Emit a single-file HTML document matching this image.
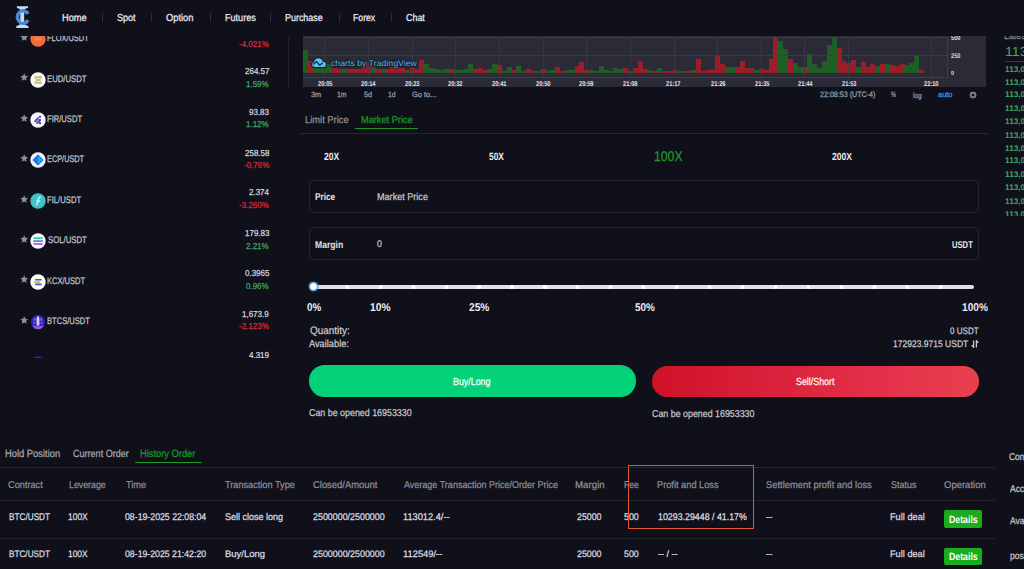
<!DOCTYPE html>
<html><head><meta charset="utf-8"><style>
html,body{margin:0;padding:0;}
body{width:1024px;height:569px;overflow:hidden;background:#0f101a;position:relative;font-family:"Liberation Sans", sans-serif;text-rendering:geometricPrecision;}
.t{position:absolute;white-space:nowrap;transform-origin:0 0;-webkit-text-stroke:0.25px currentColor;}
</style></head><body>
<svg style="position:absolute;left:0;top:0" width="40" height="34" viewBox="0 0 40 34">
<path d="M16.9 6.2 H28.1 V8.1 Q24.6 8.6 24.2 10.5 V23.6 Q24.6 25.5 28.5 26 V28 H16.3 V26 Q20.0 25.5 20.4 23.6 V10.5 Q20.0 8.6 16.9 8.1 Z" fill="#c6daf4"/>
<path d="M28.1 13.9 A5.75 6.15 0 1 0 28.1 20.2" fill="none" stroke="#4a86d6" stroke-width="3.6"/>
<rect x="20.6" y="12.6" width="3.4" height="9" fill="#c6daf4"/>
</svg>
<div style="position:absolute;left:101.70px;top:13.30px;width:1.00px;height:8.30px;background:#2e2f3a;"></div>
<div style="position:absolute;left:151.20px;top:13.30px;width:1.00px;height:8.30px;background:#2e2f3a;"></div>
<div style="position:absolute;left:209.50px;top:13.30px;width:1.00px;height:8.30px;background:#2e2f3a;"></div>
<div style="position:absolute;left:270.00px;top:13.30px;width:1.00px;height:8.30px;background:#2e2f3a;"></div>
<div style="position:absolute;left:338.50px;top:13.30px;width:1.00px;height:8.30px;background:#2e2f3a;"></div>
<div style="position:absolute;left:390.50px;top:13.30px;width:1.00px;height:8.30px;background:#2e2f3a;"></div>
<svg style="position:absolute;left:30.05px;top:31.10px" width="16" height="16" viewBox="0 0 16 16"><circle cx="8" cy="8" r="7.7" fill="#f26a38"/><rect x="4.5" y="6.5" width="7" height="3" fill="#f79a70" opacity=".6"/></svg>
<svg style="position:absolute;left:20.4px;top:33.00px" width="8.4" height="8.4" viewBox="0 0 8 8"><path d="M4 0.3 L5.1 2.7 L7.7 3 L5.8 4.8 L6.3 7.4 L4 6.1 L1.7 7.4 L2.2 4.8 L0.3 3 L2.9 2.7 Z" fill="#8e8e96"/></svg>
<svg style="position:absolute;left:30.05px;top:71.50px" width="16" height="16" viewBox="0 0 16 16"><circle cx="8" cy="8" r="7.7" fill="#fbfaf2"/><path d="M4.4 5 H11.8 M4.4 11 H11.8" stroke="#8f8a4e" stroke-width="1.1"/><path d="M5 5.6 L11.2 10.4 M11.2 5.6 L5 10.4" stroke="#d9cf8e" stroke-width="1.8"/><path d="M5.2 8 H11" stroke="#bfb36a" stroke-width="0.9"/></svg>
<svg style="position:absolute;left:20.4px;top:73.40px" width="8.4" height="8.4" viewBox="0 0 8 8"><path d="M4 0.3 L5.1 2.7 L7.7 3 L5.8 4.8 L6.3 7.4 L4 6.1 L1.7 7.4 L2.2 4.8 L0.3 3 L2.9 2.7 Z" fill="#8e8e96"/></svg>
<svg style="position:absolute;left:30.05px;top:111.90px" width="16" height="16" viewBox="0 0 16 16"><circle cx="8" cy="8" r="7.7" fill="#f8f8fc"/><path d="M5.2 9.2 L8 6.4 M7.2 11 L9.4 8.8" stroke="#5b50ae" stroke-width="2.2" stroke-linecap="round"/><circle cx="10" cy="4.8" r="1.1" fill="#3b3090"/><circle cx="10" cy="8" r="1.1" fill="#3b3090"/><circle cx="10" cy="11.2" r="1.1" fill="#3b3090"/></svg>
<svg style="position:absolute;left:20.4px;top:113.80px" width="8.4" height="8.4" viewBox="0 0 8 8"><path d="M4 0.3 L5.1 2.7 L7.7 3 L5.8 4.8 L6.3 7.4 L4 6.1 L1.7 7.4 L2.2 4.8 L0.3 3 L2.9 2.7 Z" fill="#8e8e96"/></svg>
<svg style="position:absolute;left:30.05px;top:152.30px" width="16" height="16" viewBox="0 0 16 16"><circle cx="8" cy="8" r="7.7" fill="#f0f4ff"/><path d="M8 2.2 L13.6 8 L8 13.8 L2.4 8 Z" fill="#1b78e6"/><path d="M8 3.4 L12 8 L8 12.6 Z" fill="#22b6f2" opacity=".8"/></svg>
<svg style="position:absolute;left:20.4px;top:154.20px" width="8.4" height="8.4" viewBox="0 0 8 8"><path d="M4 0.3 L5.1 2.7 L7.7 3 L5.8 4.8 L6.3 7.4 L4 6.1 L1.7 7.4 L2.2 4.8 L0.3 3 L2.9 2.7 Z" fill="#8e8e96"/></svg>
<svg style="position:absolute;left:30.05px;top:192.70px" width="16" height="16" viewBox="0 0 16 16"><circle cx="8" cy="8" r="7.7" fill="#40c2cb"/><path d="M6 12.4 C7.5 11 8 9 8.3 7 C8.6 4.8 9.4 3.8 10.6 3.8 M6 8 H10.4" stroke="#dff7f8" stroke-width="1.2" fill="none"/></svg>
<svg style="position:absolute;left:20.4px;top:194.60px" width="8.4" height="8.4" viewBox="0 0 8 8"><path d="M4 0.3 L5.1 2.7 L7.7 3 L5.8 4.8 L6.3 7.4 L4 6.1 L1.7 7.4 L2.2 4.8 L0.3 3 L2.9 2.7 Z" fill="#8e8e96"/></svg>
<svg style="position:absolute;left:30.05px;top:233.10px" width="16" height="16" viewBox="0 0 16 16"><circle cx="8" cy="8" r="7.7" fill="#f6f8fc"/><rect x="3.6" y="4.3" width="9" height="1.8" fill="#33c2a0"/><rect x="3.2" y="7.2" width="9.6" height="1.8" fill="#6a88c6"/><rect x="3.6" y="10.1" width="9" height="1.8" fill="#b45ad8"/></svg>
<svg style="position:absolute;left:20.4px;top:235.00px" width="8.4" height="8.4" viewBox="0 0 8 8"><path d="M4 0.3 L5.1 2.7 L7.7 3 L5.8 4.8 L6.3 7.4 L4 6.1 L1.7 7.4 L2.2 4.8 L0.3 3 L2.9 2.7 Z" fill="#8e8e96"/></svg>
<svg style="position:absolute;left:30.05px;top:273.50px" width="16" height="16" viewBox="0 0 16 16"><circle cx="8" cy="8" r="7.7" fill="#fbfbfd"/><rect x="5" y="5" width="6.8" height="1.6" rx=".8" fill="#2a62c6"/><rect x="3.9" y="7.3" width="6.4" height="1.6" rx=".8" fill="#e8b038"/><rect x="5" y="9.6" width="6.8" height="1.6" rx=".8" fill="#2a62c6"/></svg>
<svg style="position:absolute;left:20.4px;top:275.40px" width="8.4" height="8.4" viewBox="0 0 8 8"><path d="M4 0.3 L5.1 2.7 L7.7 3 L5.8 4.8 L6.3 7.4 L4 6.1 L1.7 7.4 L2.2 4.8 L0.3 3 L2.9 2.7 Z" fill="#8e8e96"/></svg>
<svg style="position:absolute;left:30.05px;top:313.90px" width="16" height="16" viewBox="0 0 16 16"><circle cx="8" cy="8" r="7.2" fill="#2c1fb8"/><path d="M8 1.6 L9.4 4 L9.4 11.4 L6.6 11.4 L6.6 4 Z" fill="#d6d2f8"/><path d="M3.4 6 H5.6 M10.4 6 H12.6 M3.2 9 H5.4 M10.6 9 H12.8 M4 4 L5.6 5 M12 4 L10.4 5" stroke="#9d96ee" stroke-width="1"/><path d="M2.4 11 Q8 13.4 13.6 11 Q12.6 15.2 8 15.2 Q3.4 15.2 2.4 11 Z" fill="#9b58e6"/></svg>
<svg style="position:absolute;left:20.4px;top:315.80px" width="8.4" height="8.4" viewBox="0 0 8 8"><path d="M4 0.3 L5.1 2.7 L7.7 3 L5.8 4.8 L6.3 7.4 L4 6.1 L1.7 7.4 L2.2 4.8 L0.3 3 L2.9 2.7 Z" fill="#8e8e96"/></svg>
<svg style="position:absolute;left:30.05px;top:356.20px" width="16" height="16" viewBox="0 0 16 16"><circle cx="8" cy="8" r="7.7" fill="#2a20c6"/></svg>
<svg style="position:absolute;left:20.4px;top:358.10px" width="8.4" height="8.4" viewBox="0 0 8 8"><path d="M4 0.3 L5.1 2.7 L7.7 3 L5.8 4.8 L6.3 7.4 L4 6.1 L1.7 7.4 L2.2 4.8 L0.3 3 L2.9 2.7 Z" fill="#8e8e96"/></svg>
<div style="position:absolute;left:287.80px;top:37.00px;width:1.00px;height:50.00px;background:#23242f;"></div>
<div style="position:absolute;left:303.00px;top:36.40px;width:683.00px;height:51.00px;background:#2b2a37;"></div>
<div style="position:absolute;left:303.00px;top:50.20px;width:5.00px;height:23.00px;background:#1f5f26;"></div>
<div style="position:absolute;left:307.85px;top:60.50px;width:5.00px;height:12.70px;background:#9a1d2a;"></div>
<div style="position:absolute;left:312.70px;top:66.20px;width:5.00px;height:7.00px;background:#1f5f26;"></div>
<div style="position:absolute;left:317.55px;top:66.20px;width:5.00px;height:7.00px;background:#1f5f26;"></div>
<div style="position:absolute;left:322.40px;top:64.20px;width:5.00px;height:9.00px;background:#1f5f26;"></div>
<div style="position:absolute;left:327.25px;top:64.20px;width:5.00px;height:9.00px;background:#1f5f26;"></div>
<div style="position:absolute;left:332.10px;top:68.20px;width:5.00px;height:5.00px;background:#9a1d2a;"></div>
<div style="position:absolute;left:336.95px;top:69.20px;width:5.00px;height:4.00px;background:#9a1d2a;"></div>
<div style="position:absolute;left:341.80px;top:69.20px;width:5.00px;height:4.00px;background:#1f5f26;"></div>
<div style="position:absolute;left:346.65px;top:69.20px;width:5.00px;height:4.00px;background:#9a1d2a;"></div>
<div style="position:absolute;left:351.50px;top:69.20px;width:5.00px;height:4.00px;background:#9a1d2a;"></div>
<div style="position:absolute;left:356.35px;top:69.20px;width:5.00px;height:4.00px;background:#9a1d2a;"></div>
<div style="position:absolute;left:361.20px;top:68.20px;width:5.00px;height:5.00px;background:#9a1d2a;"></div>
<div style="position:absolute;left:366.05px;top:62.20px;width:5.00px;height:11.00px;background:#9a1d2a;"></div>
<div style="position:absolute;left:370.90px;top:67.20px;width:5.00px;height:6.00px;background:#1f5f26;"></div>
<div style="position:absolute;left:375.75px;top:69.20px;width:5.00px;height:4.00px;background:#9a1d2a;"></div>
<div style="position:absolute;left:380.60px;top:69.20px;width:5.00px;height:4.00px;background:#1f5f26;"></div>
<div style="position:absolute;left:385.45px;top:69.20px;width:5.00px;height:4.00px;background:#9a1d2a;"></div>
<div style="position:absolute;left:390.30px;top:67.20px;width:5.00px;height:6.00px;background:#9a1d2a;"></div>
<div style="position:absolute;left:395.15px;top:68.20px;width:5.00px;height:5.00px;background:#9a1d2a;"></div>
<div style="position:absolute;left:400.00px;top:68.20px;width:5.00px;height:5.00px;background:#9a1d2a;"></div>
<div style="position:absolute;left:404.85px;top:70.20px;width:5.00px;height:3.00px;background:#1f5f26;"></div>
<div style="position:absolute;left:409.70px;top:68.20px;width:5.00px;height:5.00px;background:#9a1d2a;"></div>
<div style="position:absolute;left:414.55px;top:69.20px;width:5.00px;height:4.00px;background:#9a1d2a;"></div>
<div style="position:absolute;left:419.40px;top:60.20px;width:5.00px;height:13.00px;background:#9a1d2a;"></div>
<div style="position:absolute;left:424.25px;top:63.70px;width:5.00px;height:9.50px;background:#1f5f26;"></div>
<div style="position:absolute;left:429.10px;top:68.20px;width:5.00px;height:5.00px;background:#1f5f26;"></div>
<div style="position:absolute;left:433.95px;top:69.20px;width:5.00px;height:4.00px;background:#1f5f26;"></div>
<div style="position:absolute;left:438.80px;top:69.70px;width:5.00px;height:3.50px;background:#1f5f26;"></div>
<div style="position:absolute;left:443.65px;top:68.70px;width:5.00px;height:4.50px;background:#1f5f26;"></div>
<div style="position:absolute;left:448.50px;top:69.20px;width:5.00px;height:4.00px;background:#9a1d2a;"></div>
<div style="position:absolute;left:453.35px;top:70.20px;width:5.00px;height:3.00px;background:#1f5f26;"></div>
<div style="position:absolute;left:458.20px;top:69.70px;width:5.00px;height:3.50px;background:#1f5f26;"></div>
<div style="position:absolute;left:463.05px;top:69.20px;width:5.00px;height:4.00px;background:#1f5f26;"></div>
<div style="position:absolute;left:467.90px;top:64.20px;width:5.00px;height:9.00px;background:#1f5f26;"></div>
<div style="position:absolute;left:472.75px;top:69.20px;width:5.00px;height:4.00px;background:#9a1d2a;"></div>
<div style="position:absolute;left:477.60px;top:67.70px;width:5.00px;height:5.50px;background:#9a1d2a;"></div>
<div style="position:absolute;left:482.45px;top:70.20px;width:5.00px;height:3.00px;background:#9a1d2a;"></div>
<div style="position:absolute;left:487.30px;top:69.20px;width:5.00px;height:4.00px;background:#1f5f26;"></div>
<div style="position:absolute;left:492.15px;top:64.20px;width:5.00px;height:9.00px;background:#1f5f26;"></div>
<div style="position:absolute;left:497.00px;top:65.20px;width:5.00px;height:8.00px;background:#9a1d2a;"></div>
<div style="position:absolute;left:501.85px;top:70.70px;width:5.00px;height:2.50px;background:#1f5f26;"></div>
<div style="position:absolute;left:506.70px;top:67.20px;width:5.00px;height:6.00px;background:#1f5f26;"></div>
<div style="position:absolute;left:511.55px;top:70.20px;width:5.00px;height:3.00px;background:#9a1d2a;"></div>
<div style="position:absolute;left:516.40px;top:65.70px;width:5.00px;height:7.50px;background:#1f5f26;"></div>
<div style="position:absolute;left:521.25px;top:70.70px;width:5.00px;height:2.50px;background:#1f5f26;"></div>
<div style="position:absolute;left:526.10px;top:68.70px;width:5.00px;height:4.50px;background:#9a1d2a;"></div>
<div style="position:absolute;left:530.95px;top:70.70px;width:5.00px;height:2.50px;background:#9a1d2a;"></div>
<div style="position:absolute;left:535.80px;top:70.70px;width:5.00px;height:2.50px;background:#1f5f26;"></div>
<div style="position:absolute;left:540.65px;top:68.70px;width:5.00px;height:4.50px;background:#9a1d2a;"></div>
<div style="position:absolute;left:545.50px;top:70.70px;width:5.00px;height:2.50px;background:#1f5f26;"></div>
<div style="position:absolute;left:550.35px;top:70.20px;width:5.00px;height:3.00px;background:#1f5f26;"></div>
<div style="position:absolute;left:555.20px;top:66.70px;width:5.00px;height:6.50px;background:#9a1d2a;"></div>
<div style="position:absolute;left:560.05px;top:70.70px;width:5.00px;height:2.50px;background:#9a1d2a;"></div>
<div style="position:absolute;left:564.90px;top:69.70px;width:5.00px;height:3.50px;background:#1f5f26;"></div>
<div style="position:absolute;left:569.75px;top:69.70px;width:5.00px;height:3.50px;background:#1f5f26;"></div>
<div style="position:absolute;left:574.60px;top:65.70px;width:5.00px;height:7.50px;background:#9a1d2a;"></div>
<div style="position:absolute;left:579.45px;top:62.20px;width:5.00px;height:11.00px;background:#9a1d2a;"></div>
<div style="position:absolute;left:584.30px;top:70.20px;width:5.00px;height:3.00px;background:#9a1d2a;"></div>
<div style="position:absolute;left:589.15px;top:69.70px;width:5.00px;height:3.50px;background:#1f5f26;"></div>
<div style="position:absolute;left:594.00px;top:70.70px;width:5.00px;height:2.50px;background:#1f5f26;"></div>
<div style="position:absolute;left:598.85px;top:65.70px;width:5.00px;height:7.50px;background:#1f5f26;"></div>
<div style="position:absolute;left:603.70px;top:69.70px;width:5.00px;height:3.50px;background:#1f5f26;"></div>
<div style="position:absolute;left:608.55px;top:70.70px;width:5.00px;height:2.50px;background:#1f5f26;"></div>
<div style="position:absolute;left:613.40px;top:67.70px;width:5.00px;height:5.50px;background:#1f5f26;"></div>
<div style="position:absolute;left:618.25px;top:69.20px;width:5.00px;height:4.00px;background:#1f5f26;"></div>
<div style="position:absolute;left:623.10px;top:68.20px;width:5.00px;height:5.00px;background:#9a1d2a;"></div>
<div style="position:absolute;left:627.95px;top:70.70px;width:5.00px;height:2.50px;background:#1f5f26;"></div>
<div style="position:absolute;left:632.80px;top:68.20px;width:5.00px;height:5.00px;background:#9a1d2a;"></div>
<div style="position:absolute;left:637.65px;top:61.20px;width:5.00px;height:12.00px;background:#9a1d2a;"></div>
<div style="position:absolute;left:642.50px;top:69.20px;width:5.00px;height:4.00px;background:#9a1d2a;"></div>
<div style="position:absolute;left:647.35px;top:70.20px;width:5.00px;height:3.00px;background:#1f5f26;"></div>
<div style="position:absolute;left:652.20px;top:71.20px;width:5.00px;height:2.00px;background:#9a1d2a;"></div>
<div style="position:absolute;left:657.05px;top:67.70px;width:5.00px;height:5.50px;background:#1f5f26;"></div>
<div style="position:absolute;left:661.90px;top:70.70px;width:5.00px;height:2.50px;background:#9a1d2a;"></div>
<div style="position:absolute;left:666.75px;top:70.70px;width:5.00px;height:2.50px;background:#9a1d2a;"></div>
<div style="position:absolute;left:671.60px;top:70.20px;width:5.00px;height:3.00px;background:#9a1d2a;"></div>
<div style="position:absolute;left:676.45px;top:70.70px;width:5.00px;height:2.50px;background:#1f5f26;"></div>
<div style="position:absolute;left:681.30px;top:70.70px;width:5.00px;height:2.50px;background:#1f5f26;"></div>
<div style="position:absolute;left:686.15px;top:70.70px;width:5.00px;height:2.50px;background:#9a1d2a;"></div>
<div style="position:absolute;left:691.00px;top:69.90px;width:5.00px;height:3.30px;background:#1f5f26;"></div>
<div style="position:absolute;left:695.85px;top:59.20px;width:5.00px;height:14.00px;background:#9a1d2a;"></div>
<div style="position:absolute;left:700.70px;top:70.70px;width:5.00px;height:2.50px;background:#9a1d2a;"></div>
<div style="position:absolute;left:705.55px;top:70.20px;width:5.00px;height:3.00px;background:#9a1d2a;"></div>
<div style="position:absolute;left:710.40px;top:69.90px;width:5.00px;height:3.30px;background:#9a1d2a;"></div>
<div style="position:absolute;left:715.25px;top:55.70px;width:5.00px;height:17.50px;background:#9a1d2a;"></div>
<div style="position:absolute;left:720.10px;top:63.50px;width:5.00px;height:9.70px;background:#9a1d2a;"></div>
<div style="position:absolute;left:724.95px;top:67.40px;width:5.00px;height:5.80px;background:#1f5f26;"></div>
<div style="position:absolute;left:729.80px;top:67.40px;width:5.00px;height:5.80px;background:#1f5f26;"></div>
<div style="position:absolute;left:734.65px;top:66.50px;width:5.00px;height:6.70px;background:#9a1d2a;"></div>
<div style="position:absolute;left:739.50px;top:61.20px;width:5.00px;height:12.00px;background:#9a1d2a;"></div>
<div style="position:absolute;left:744.35px;top:67.90px;width:5.00px;height:5.30px;background:#9a1d2a;"></div>
<div style="position:absolute;left:749.20px;top:67.90px;width:5.00px;height:5.30px;background:#9a1d2a;"></div>
<div style="position:absolute;left:754.05px;top:70.20px;width:5.00px;height:3.00px;background:#1f5f26;"></div>
<div style="position:absolute;left:758.90px;top:68.90px;width:5.00px;height:4.30px;background:#9a1d2a;"></div>
<div style="position:absolute;left:763.75px;top:69.90px;width:5.00px;height:3.30px;background:#9a1d2a;"></div>
<div style="position:absolute;left:768.60px;top:59.20px;width:5.00px;height:14.00px;background:#9a1d2a;"></div>
<div style="position:absolute;left:773.45px;top:37.00px;width:5.00px;height:36.20px;background:#9a1d2a;"></div>
<div style="position:absolute;left:778.30px;top:40.60px;width:5.00px;height:32.60px;background:#1f5f26;"></div>
<div style="position:absolute;left:783.15px;top:49.20px;width:5.00px;height:24.00px;background:#1f5f26;"></div>
<div style="position:absolute;left:788.00px;top:59.20px;width:5.00px;height:14.00px;background:#9a1d2a;"></div>
<div style="position:absolute;left:792.85px;top:63.20px;width:5.00px;height:10.00px;background:#1f5f26;"></div>
<div style="position:absolute;left:797.70px;top:67.40px;width:5.00px;height:5.80px;background:#1f5f26;"></div>
<div style="position:absolute;left:802.55px;top:67.40px;width:5.00px;height:5.80px;background:#9a1d2a;"></div>
<div style="position:absolute;left:807.40px;top:54.20px;width:5.00px;height:19.00px;background:#1f5f26;"></div>
<div style="position:absolute;left:812.25px;top:64.20px;width:5.00px;height:9.00px;background:#1f5f26;"></div>
<div style="position:absolute;left:817.10px;top:67.90px;width:5.00px;height:5.30px;background:#1f5f26;"></div>
<div style="position:absolute;left:821.95px;top:61.20px;width:5.00px;height:12.00px;background:#1f5f26;"></div>
<div style="position:absolute;left:826.80px;top:44.50px;width:5.00px;height:28.70px;background:#1f5f26;"></div>
<div style="position:absolute;left:831.65px;top:37.00px;width:5.00px;height:36.20px;background:#1f5f26;"></div>
<div style="position:absolute;left:836.50px;top:48.40px;width:5.00px;height:24.80px;background:#9a1d2a;"></div>
<div style="position:absolute;left:841.35px;top:61.20px;width:5.00px;height:12.00px;background:#9a1d2a;"></div>
<div style="position:absolute;left:846.20px;top:63.20px;width:5.00px;height:10.00px;background:#9a1d2a;"></div>
<div style="position:absolute;left:851.05px;top:59.60px;width:5.00px;height:13.60px;background:#9a1d2a;"></div>
<div style="position:absolute;left:855.90px;top:67.40px;width:5.00px;height:5.80px;background:#1f5f26;"></div>
<div style="position:absolute;left:860.75px;top:62.20px;width:5.00px;height:11.00px;background:#9a1d2a;"></div>
<div style="position:absolute;left:865.60px;top:67.40px;width:5.00px;height:5.80px;background:#9a1d2a;"></div>
<div style="position:absolute;left:870.45px;top:64.20px;width:5.00px;height:9.00px;background:#9a1d2a;"></div>
<div style="position:absolute;left:875.30px;top:65.50px;width:5.00px;height:7.70px;background:#1f5f26;"></div>
<div style="position:absolute;left:880.15px;top:64.20px;width:5.00px;height:9.00px;background:#9a1d2a;"></div>
<div style="position:absolute;left:885.00px;top:64.20px;width:5.00px;height:9.00px;background:#1f5f26;"></div>
<div style="position:absolute;left:889.85px;top:65.00px;width:5.00px;height:8.20px;background:#9a1d2a;"></div>
<div style="position:absolute;left:894.70px;top:66.00px;width:5.00px;height:7.20px;background:#9a1d2a;"></div>
<div style="position:absolute;left:899.55px;top:64.20px;width:5.00px;height:9.00px;background:#9a1d2a;"></div>
<div style="position:absolute;left:904.40px;top:65.00px;width:5.00px;height:8.20px;background:#1f5f26;"></div>
<div style="position:absolute;left:909.25px;top:63.20px;width:5.00px;height:10.00px;background:#1f5f26;"></div>
<div style="position:absolute;left:914.10px;top:55.70px;width:5.00px;height:17.50px;background:#1f5f26;"></div>
<div style="position:absolute;left:918.95px;top:70.40px;width:5.00px;height:2.80px;background:#9a1d2a;"></div>
<div style="position:absolute;left:303.00px;top:36.90px;width:645.00px;height:1.00px;background:#3e3d4b;opacity:.85"></div>
<div style="position:absolute;left:303.00px;top:54.90px;width:645.00px;height:1.00px;background:#3e3d4b;opacity:.85"></div>
<div style="position:absolute;left:303.00px;top:77.30px;width:645.00px;height:1.00px;background:#3e3d4b;"></div>
<div style="position:absolute;left:947.20px;top:36.90px;width:1.00px;height:41.40px;background:#3e3d4b;"></div>
<div style="position:absolute;left:324.32px;top:36.90px;width:1.00px;height:41.40px;background:#3e3d4b;opacity:.75"></div>
<div style="position:absolute;left:367.98px;top:36.90px;width:1.00px;height:41.40px;background:#3e3d4b;opacity:.75"></div>
<div style="position:absolute;left:411.62px;top:36.90px;width:1.00px;height:41.40px;background:#3e3d4b;opacity:.75"></div>
<div style="position:absolute;left:455.28px;top:36.90px;width:1.00px;height:41.40px;background:#3e3d4b;opacity:.75"></div>
<div style="position:absolute;left:498.93px;top:36.90px;width:1.00px;height:41.40px;background:#3e3d4b;opacity:.75"></div>
<div style="position:absolute;left:542.57px;top:36.90px;width:1.00px;height:41.40px;background:#3e3d4b;opacity:.75"></div>
<div style="position:absolute;left:586.22px;top:36.90px;width:1.00px;height:41.40px;background:#3e3d4b;opacity:.75"></div>
<div style="position:absolute;left:629.88px;top:36.90px;width:1.00px;height:41.40px;background:#3e3d4b;opacity:.75"></div>
<div style="position:absolute;left:673.52px;top:36.90px;width:1.00px;height:41.40px;background:#3e3d4b;opacity:.75"></div>
<div style="position:absolute;left:717.17px;top:36.90px;width:1.00px;height:41.40px;background:#3e3d4b;opacity:.75"></div>
<div style="position:absolute;left:760.82px;top:36.90px;width:1.00px;height:41.40px;background:#3e3d4b;opacity:.75"></div>
<div style="position:absolute;left:804.47px;top:36.90px;width:1.00px;height:41.40px;background:#3e3d4b;opacity:.75"></div>
<div style="position:absolute;left:848.12px;top:36.90px;width:1.00px;height:41.40px;background:#3e3d4b;opacity:.75"></div>
<div style="position:absolute;left:930.57px;top:36.90px;width:1.00px;height:41.40px;background:#3e3d4b;opacity:.75"></div>
<svg style="position:absolute;left:311px;top:56px" width="17" height="13" viewBox="0 -1 17 13">
<g fill="#0f1d28"><circle cx="7.4" cy="5.8" r="5.5"/><circle cx="3.4" cy="7.6" r="3.3"/><circle cx="12.2" cy="7.4" r="3.5"/><rect x="3.4" y="7.4" width="8.8" height="3.6"/></g>
<g fill="#56c2ee"><circle cx="7.4" cy="5.6" r="4.4"/><circle cx="3.4" cy="7.6" r="2.4"/><circle cx="12.2" cy="7.4" r="2.6"/><rect x="3.4" y="7.4" width="8.8" height="2.6"/></g>
<path d="M2.1 7.6 L5.4 4.6 L8.8 8.2 L11.8 5.8" fill="none" stroke="#0f1d28" stroke-width="1.1"/>
</svg>
<svg style="position:absolute;left:969.2px;top:90.6px" width="8" height="8" viewBox="0 0 8 8">
<circle cx="4" cy="4" r="2.2" fill="none" stroke="#8e8e9a" stroke-width="1.4"/>
<path d="M4 0.4 V1.6 M4 6.4 V7.6 M0.4 4 H1.6 M6.4 4 H7.6 M1.45 1.45 L2.3 2.3 M5.7 5.7 L6.55 6.55 M6.55 1.45 L5.7 2.3 M2.3 5.7 L1.45 6.55" stroke="#8e8e9a" stroke-width="1.2"/>
</svg>
<div style="position:absolute;left:355.20px;top:127.50px;width:62.90px;height:1.10px;background:#1d9a26;border-radius:1px;"></div>
<div style="position:absolute;left:299.00px;top:133.10px;width:689.50px;height:1.00px;background:#262733;"></div>
<div style="position:absolute;left:309.2px;top:180.1px;width:668.2px;height:30.6px;border:1px solid #24252f;border-radius:4px;"></div>
<div style="position:absolute;left:309.2px;top:227.2px;width:668.2px;height:30.5px;border:1px solid #24252f;border-radius:4px;"></div>
<div style="position:absolute;left:313.70px;top:284.80px;width:660.00px;height:4.40px;background:#e0e2eb;border-radius:2.2px;"></div>
<div style="position:absolute;left:345.65px;top:285.4px;width:3.2px;height:3.2px;border-radius:50%;background:#ffffff;"></div>
<div style="position:absolute;left:378.60px;top:285.4px;width:3.2px;height:3.2px;border-radius:50%;background:#ffffff;"></div>
<div style="position:absolute;left:411.55px;top:285.4px;width:3.2px;height:3.2px;border-radius:50%;background:#ffffff;"></div>
<div style="position:absolute;left:444.50px;top:285.4px;width:3.2px;height:3.2px;border-radius:50%;background:#ffffff;"></div>
<div style="position:absolute;left:477.45px;top:285.4px;width:3.2px;height:3.2px;border-radius:50%;background:#ffffff;"></div>
<div style="position:absolute;left:510.40px;top:285.4px;width:3.2px;height:3.2px;border-radius:50%;background:#ffffff;"></div>
<div style="position:absolute;left:543.35px;top:285.4px;width:3.2px;height:3.2px;border-radius:50%;background:#ffffff;"></div>
<div style="position:absolute;left:576.30px;top:285.4px;width:3.2px;height:3.2px;border-radius:50%;background:#ffffff;"></div>
<div style="position:absolute;left:609.25px;top:285.4px;width:3.2px;height:3.2px;border-radius:50%;background:#ffffff;"></div>
<div style="position:absolute;left:642.20px;top:285.4px;width:3.2px;height:3.2px;border-radius:50%;background:#ffffff;"></div>
<div style="position:absolute;left:675.15px;top:285.4px;width:3.2px;height:3.2px;border-radius:50%;background:#ffffff;"></div>
<div style="position:absolute;left:708.10px;top:285.4px;width:3.2px;height:3.2px;border-radius:50%;background:#ffffff;"></div>
<div style="position:absolute;left:741.05px;top:285.4px;width:3.2px;height:3.2px;border-radius:50%;background:#ffffff;"></div>
<div style="position:absolute;left:774.00px;top:285.4px;width:3.2px;height:3.2px;border-radius:50%;background:#ffffff;"></div>
<div style="position:absolute;left:806.95px;top:285.4px;width:3.2px;height:3.2px;border-radius:50%;background:#ffffff;"></div>
<div style="position:absolute;left:839.90px;top:285.4px;width:3.2px;height:3.2px;border-radius:50%;background:#ffffff;"></div>
<div style="position:absolute;left:872.85px;top:285.4px;width:3.2px;height:3.2px;border-radius:50%;background:#ffffff;"></div>
<div style="position:absolute;left:905.80px;top:285.4px;width:3.2px;height:3.2px;border-radius:50%;background:#ffffff;"></div>
<div style="position:absolute;left:938.75px;top:285.4px;width:3.2px;height:3.2px;border-radius:50%;background:#ffffff;"></div>
<div style="position:absolute;left:308.9px;top:282.0px;width:7.2px;height:7.2px;border-radius:50%;background:#ffffff;border:1.4px solid #4a94e4;box-shadow:0 0 1.5px 0.3px #3d8fe6;"></div>
<svg style="position:absolute;left:970.9px;top:340.3px" width="8" height="8" viewBox="0 0 8 8">
<path d="M2.6 0.4 V7.2 L0.6 5.2 M5.4 7.6 V0.8 L7.4 2.8" fill="none" stroke="#c8c9d1" stroke-width="1.3"/></svg>
<div style="position:absolute;left:308.9px;top:365.2px;width:327.6px;height:31.4px;border-radius:15.7px;background:#03d27b;"></div>
<div style="position:absolute;left:652.0px;top:365.5px;width:327.4px;height:31.2px;border-radius:15.6px;background:linear-gradient(90deg,#d0112a,#e4304a 70%,#e8404f);"></div>
<div style="position:absolute;left:1004.70px;top:61.10px;width:20.00px;height:1.00px;background:#3a3b47;"></div>
<div style="position:absolute;left:135.40px;top:462.10px;width:66.60px;height:1.10px;background:#1d9a26;border-radius:1px;"></div>
<div style="position:absolute;left:0.00px;top:467.00px;width:994.50px;height:1.00px;background:#262733;"></div>
<div style="position:absolute;left:0.00px;top:499.80px;width:994.50px;height:1.00px;background:#22232e;"></div>
<div style="position:absolute;left:0.00px;top:537.80px;width:994.50px;height:1.00px;background:#22232e;"></div>
<div style="position:absolute;left:943.8px;top:510.0px;width:38.2px;height:17.7px;border-radius:2px;background:#19ad1d;"></div>
<div style="position:absolute;left:943.8px;top:547.7px;width:38.2px;height:17.7px;border-radius:2px;background:#19ad1d;"></div>
<div class="t" style="left:61.51px;top:13.54px;font-size:10.14px;line-height:10.14px;color:#ececf2;transform:scaleX(0.9170);">Home</div>
<div class="t" style="left:117.31px;top:13.52px;font-size:10.14px;line-height:10.14px;color:#ececf2;transform:scaleX(0.8924);">Spot</div>
<div class="t" style="left:166.01px;top:13.55px;font-size:10.14px;line-height:10.14px;color:#ececf2;transform:scaleX(0.9215);">Option</div>
<div class="t" style="left:225.08px;top:13.55px;font-size:10.14px;line-height:10.14px;color:#ececf2;transform:scaleX(0.8951);">Futures</div>
<div class="t" style="left:285.30px;top:13.56px;font-size:10.14px;line-height:10.14px;color:#ececf2;transform:scaleX(0.8809);">Purchase</div>
<div class="t" style="left:352.94px;top:13.55px;font-size:10.14px;line-height:10.14px;color:#ececf2;transform:scaleX(0.8584);">Forex</div>
<div class="t" style="left:405.91px;top:13.53px;font-size:10.14px;line-height:10.14px;color:#ececf2;transform:scaleX(0.8805);">Chat</div>
<div class="t" style="left:47.46px;top:34.22px;font-size:9.57px;line-height:9.57px;color:#c4c5cd;transform:scaleX(0.7769);">FLOX/USDT</div>
<div class="t" style="left:239.28px;top:39.75px;font-size:8.70px;line-height:8.70px;color:#dd2833;transform:scaleX(0.9200);">-4.021%</div>
<div class="t" style="left:47.43px;top:74.76px;font-size:9.57px;line-height:9.57px;color:#c4c5cd;transform:scaleX(0.8086);">EUD/USDT</div>
<div class="t" style="left:245.15px;top:67.38px;font-size:8.70px;line-height:8.70px;color:#d2d3da;transform:scaleX(0.9200);">264.57</div>
<div class="t" style="left:246.48px;top:79.56px;font-size:8.70px;line-height:8.70px;color:#3fa567;transform:scaleX(0.9200);">1.59%</div>
<div class="t" style="left:47.43px;top:114.54px;font-size:9.57px;line-height:9.57px;color:#c4c5cd;transform:scaleX(0.7951);">FIR/USDT</div>
<div class="t" style="left:249.32px;top:107.99px;font-size:8.70px;line-height:8.70px;color:#d2d3da;transform:scaleX(0.9200);">93.83</div>
<div class="t" style="left:246.48px;top:120.12px;font-size:8.70px;line-height:8.70px;color:#3fa567;transform:scaleX(0.9200);">1.12%</div>
<div class="t" style="left:47.46px;top:155.10px;font-size:9.57px;line-height:9.57px;color:#c4c5cd;transform:scaleX(0.7673);">ECP/USDT</div>
<div class="t" style="left:245.15px;top:148.52px;font-size:8.70px;line-height:8.70px;color:#d2d3da;transform:scaleX(0.9200);">258.58</div>
<div class="t" style="left:243.70px;top:160.62px;font-size:8.70px;line-height:8.70px;color:#dd2833;transform:scaleX(0.9200);">-0.76%</div>
<div class="t" style="left:47.43px;top:195.64px;font-size:9.57px;line-height:9.57px;color:#c4c5cd;transform:scaleX(0.8029);">FIL/USDT</div>
<div class="t" style="left:249.08px;top:188.31px;font-size:8.70px;line-height:8.70px;color:#d2d3da;transform:scaleX(0.9200);">2.374</div>
<div class="t" style="left:239.28px;top:201.19px;font-size:8.70px;line-height:8.70px;color:#dd2833;transform:scaleX(0.9200);">-3.260%</div>
<div class="t" style="left:47.80px;top:236.17px;font-size:9.57px;line-height:9.57px;color:#c4c5cd;transform:scaleX(0.8116);">SOL/USDT</div>
<div class="t" style="left:245.15px;top:228.84px;font-size:8.70px;line-height:8.70px;color:#d2d3da;transform:scaleX(0.9200);">179.83</div>
<div class="t" style="left:246.48px;top:241.80px;font-size:8.70px;line-height:8.70px;color:#3fa567;transform:scaleX(0.9200);">2.21%</div>
<div class="t" style="left:47.44px;top:276.78px;font-size:9.57px;line-height:9.57px;color:#c4c5cd;transform:scaleX(0.7891);">KCX/USDT</div>
<div class="t" style="left:245.13px;top:269.43px;font-size:8.70px;line-height:8.70px;color:#d2d3da;transform:scaleX(0.9200);">0.3965</div>
<div class="t" style="left:246.48px;top:281.56px;font-size:8.70px;line-height:8.70px;color:#3fa567;transform:scaleX(0.9200);">0.96%</div>
<div class="t" style="left:47.44px;top:316.54px;font-size:9.57px;line-height:9.57px;color:#c4c5cd;transform:scaleX(0.7911);">BTCS/USDT</div>
<div class="t" style="left:242.47px;top:310.01px;font-size:8.70px;line-height:8.70px;color:#d2d3da;transform:scaleX(0.9200);">1,673.9</div>
<div class="t" style="left:239.28px;top:322.07px;font-size:8.70px;line-height:8.70px;color:#dd2833;transform:scaleX(0.9200);">-2.123%</div>
<div class="t" style="left:249.43px;top:350.55px;font-size:8.70px;line-height:8.70px;color:#d2d3da;transform:scaleX(0.9200);">4.319</div>
<div class="t" style="left:246.48px;top:362.68px;font-size:8.70px;line-height:8.70px;color:#3fa567;transform:scaleX(0.9200);">0.12%</div>
<div class="t" style="left:317.53px;top:81.44px;font-size:7.10px;line-height:7.10px;color:#e6e6ee;font-weight:bold;-webkit-text-stroke:0;transform:scaleX(0.8000);">20:05</div>
<div class="t" style="left:360.94px;top:81.44px;font-size:7.10px;line-height:7.10px;color:#e6e6ee;font-weight:bold;-webkit-text-stroke:0;transform:scaleX(0.8000);">20:14</div>
<div class="t" style="left:404.82px;top:81.44px;font-size:7.10px;line-height:7.10px;color:#e6e6ee;font-weight:bold;-webkit-text-stroke:0;transform:scaleX(0.8000);">20:23</div>
<div class="t" style="left:448.48px;top:81.44px;font-size:7.10px;line-height:7.10px;color:#e6e6ee;font-weight:bold;-webkit-text-stroke:0;transform:scaleX(0.8000);">20:32</div>
<div class="t" style="left:491.99px;top:81.44px;font-size:7.10px;line-height:7.10px;color:#e6e6ee;font-weight:bold;-webkit-text-stroke:0;transform:scaleX(0.8000);">20:41</div>
<div class="t" style="left:535.62px;top:81.44px;font-size:7.10px;line-height:7.10px;color:#e6e6ee;font-weight:bold;-webkit-text-stroke:0;transform:scaleX(0.8000);">20:50</div>
<div class="t" style="left:579.17px;top:81.44px;font-size:7.10px;line-height:7.10px;color:#e6e6ee;font-weight:bold;-webkit-text-stroke:0;transform:scaleX(0.8000);">20:59</div>
<div class="t" style="left:622.73px;top:81.44px;font-size:7.10px;line-height:7.10px;color:#e6e6ee;font-weight:bold;-webkit-text-stroke:0;transform:scaleX(0.8000);">21:08</div>
<div class="t" style="left:666.49px;top:81.44px;font-size:7.10px;line-height:7.10px;color:#e6e6ee;font-weight:bold;-webkit-text-stroke:0;transform:scaleX(0.8000);">21:17</div>
<div class="t" style="left:710.99px;top:81.44px;font-size:7.10px;line-height:7.10px;color:#e6e6ee;font-weight:bold;-webkit-text-stroke:0;transform:scaleX(0.8000);">21:26</div>
<div class="t" style="left:754.53px;top:81.44px;font-size:7.10px;line-height:7.10px;color:#e6e6ee;font-weight:bold;-webkit-text-stroke:0;transform:scaleX(0.8000);">21:35</div>
<div class="t" style="left:797.94px;top:81.44px;font-size:7.10px;line-height:7.10px;color:#e6e6ee;font-weight:bold;-webkit-text-stroke:0;transform:scaleX(0.8000);">21:44</div>
<div class="t" style="left:841.82px;top:81.44px;font-size:7.10px;line-height:7.10px;color:#e6e6ee;font-weight:bold;-webkit-text-stroke:0;transform:scaleX(0.8000);">21:53</div>
<div class="t" style="left:923.62px;top:81.44px;font-size:7.10px;line-height:7.10px;color:#e6e6ee;font-weight:bold;-webkit-text-stroke:0;transform:scaleX(0.8000);">22:10</div>
<div class="t" style="left:950.83px;top:35.83px;font-size:6.67px;line-height:6.67px;color:#dcdce4;font-weight:bold;-webkit-text-stroke:0;transform:scaleX(0.8500);">500</div>
<div class="t" style="left:950.83px;top:53.93px;font-size:6.67px;line-height:6.67px;color:#dcdce4;font-weight:bold;-webkit-text-stroke:0;transform:scaleX(0.8500);">250</div>
<div class="t" style="left:950.84px;top:70.50px;font-size:6.23px;line-height:6.23px;color:#dcdce4;font-weight:bold;-webkit-text-stroke:0;transform:scaleX(0.8500);">0</div>
<div class="t" style="left:330.52px;top:58.52px;font-size:8.41px;line-height:8.41px;color:#4eaedc;transform:scaleX(1.0404);-webkit-text-stroke:0;text-shadow:0 0 1.5px #1b2530,0 0 1.5px #1b2530,1px 0 1px #1b2530,-1px 0 1px #1b2530,0 1px 1px #1b2530,0 -1px 1px #1b2530;">charts by TradingView</div>
<div class="t" style="left:310.91px;top:91.43px;font-size:7.68px;line-height:7.68px;color:#9c9ca8;transform:scaleX(0.9661);">3m</div>
<div class="t" style="left:337.06px;top:91.44px;font-size:7.68px;line-height:7.68px;color:#9c9ca8;transform:scaleX(0.9053);">1m</div>
<div class="t" style="left:363.56px;top:91.43px;font-size:7.68px;line-height:7.68px;color:#9c9ca8;transform:scaleX(0.9422);">5d</div>
<div class="t" style="left:388.26px;top:91.45px;font-size:7.68px;line-height:7.68px;color:#9c9ca8;transform:scaleX(0.8922);">1d</div>
<div class="t" style="left:411.80px;top:91.43px;font-size:7.68px;line-height:7.68px;color:#9c9ca8;transform:scaleX(0.9725);">Go to...</div>
<div class="t" style="left:819.61px;top:91.31px;font-size:7.83px;line-height:7.83px;color:#9c9ca8;transform:scaleX(0.9101);">22:08:53 (UTC-4)</div>
<div class="t" style="left:890.91px;top:91.31px;font-size:7.83px;line-height:7.83px;color:#9c9ca8;transform:scaleX(0.7079);">%</div>
<div class="t" style="left:912.86px;top:91.50px;font-size:7.60px;line-height:7.60px;color:#9c9ca8;transform:scaleX(0.8422);">log</div>
<div class="t" style="left:938.04px;top:91.42px;font-size:7.60px;line-height:7.60px;color:#3a9be6;transform:scaleX(0.9775);">auto</div>
<div class="t" style="left:305.33px;top:115.69px;font-size:9.86px;line-height:9.86px;color:#8f9099;transform:scaleX(0.9496);">Limit Price</div>
<div class="t" style="left:360.69px;top:115.66px;font-size:9.86px;line-height:9.86px;color:#1d9a26;transform:scaleX(0.9360);">Market Price</div>
<div class="t" style="left:323.74px;top:152.63px;font-size:10.43px;line-height:10.43px;color:#ececf2;font-weight:bold;-webkit-text-stroke:0;transform:scaleX(0.8147);">20X</div>
<div class="t" style="left:488.94px;top:152.63px;font-size:10.43px;line-height:10.43px;color:#ececf2;font-weight:bold;-webkit-text-stroke:0;transform:scaleX(0.8033);">50X</div>
<div class="t" style="left:654.37px;top:148.94px;font-size:14.06px;line-height:14.06px;color:#1d9a26;transform:scaleX(0.8695);">100X</div>
<div class="t" style="left:831.74px;top:152.75px;font-size:10.29px;line-height:10.29px;color:#ececf2;font-weight:bold;-webkit-text-stroke:0;transform:scaleX(0.8277);">200X</div>
<div class="t" style="left:314.50px;top:193.22px;font-size:9.86px;line-height:9.86px;color:#e4e4ea;font-weight:bold;-webkit-text-stroke:0;transform:scaleX(0.8395);">Price</div>
<div class="t" style="left:376.65px;top:192.71px;font-size:9.86px;line-height:9.86px;color:#c6c7cf;transform:scaleX(0.9221);">Market Price</div>
<div class="t" style="left:315.46px;top:240.66px;font-size:9.86px;line-height:9.86px;color:#e4e4ea;font-weight:bold;-webkit-text-stroke:0;transform:scaleX(0.8737);">Margin</div>
<div class="t" style="left:376.97px;top:240.15px;font-size:9.86px;line-height:9.86px;color:#c6c7cf;transform:scaleX(0.8882);">0</div>
<div class="t" style="left:951.54px;top:240.66px;font-size:9.86px;line-height:9.86px;color:#e4e4ea;font-weight:bold;-webkit-text-stroke:0;transform:scaleX(0.7767);">USDT</div>
<div class="t" style="left:306.87px;top:303.33px;font-size:11.30px;line-height:11.30px;color:#ececf2;font-weight:bold;-webkit-text-stroke:0;transform:scaleX(0.8676);">0%</div>
<div class="t" style="left:369.75px;top:303.33px;font-size:11.30px;line-height:11.30px;color:#ececf2;font-weight:bold;-webkit-text-stroke:0;transform:scaleX(0.9086);">10%</div>
<div class="t" style="left:468.69px;top:303.33px;font-size:11.30px;line-height:11.30px;color:#ececf2;font-weight:bold;-webkit-text-stroke:0;transform:scaleX(0.9017);">25%</div>
<div class="t" style="left:634.69px;top:303.33px;font-size:11.30px;line-height:11.30px;color:#ececf2;font-weight:bold;-webkit-text-stroke:0;transform:scaleX(0.8800);">50%</div>
<div class="t" style="left:961.57px;top:303.33px;font-size:11.30px;line-height:11.30px;color:#ececf2;font-weight:bold;-webkit-text-stroke:0;transform:scaleX(0.8963);">100%</div>
<div class="t" style="left:309.51px;top:326.28px;font-size:10.72px;line-height:10.72px;color:#c8c9d1;transform:scaleX(0.9238);">Quantity:</div>
<div class="t" style="left:309.19px;top:339.69px;font-size:10.14px;line-height:10.14px;color:#c8c9d1;transform:scaleX(0.9132);">Available:</div>
<div class="t" style="left:949.81px;top:326.18px;font-size:9.42px;line-height:9.42px;color:#c8c9d1;transform:scaleX(0.8568);">0 USDT</div>
<div class="t" style="left:893.23px;top:339.86px;font-size:9.57px;line-height:9.57px;color:#c8c9d1;transform:scaleX(0.8900);">172923.9715 USDT</div>
<div class="t" style="left:453.42px;top:377.55px;font-size:10.30px;line-height:10.30px;color:#f4fff8;transform:scaleX(0.8600);">Buy/Long</div>
<div class="t" style="left:795.97px;top:377.54px;font-size:10.30px;line-height:10.30px;color:#fff2f4;transform:scaleX(0.8600);">Sell/Short</div>
<div class="t" style="left:309.47px;top:409.26px;font-size:10.00px;line-height:10.00px;color:#c4c5cd;transform:scaleX(0.8877);">Can be opened 16953330</div>
<div class="t" style="left:651.67px;top:410.05px;font-size:10.00px;line-height:10.00px;color:#c4c5cd;transform:scaleX(0.8859);">Can be opened 16953330</div>
<div class="t" style="left:1004.44px;top:32.30px;font-size:10.00px;line-height:10.00px;color:#8a8b96;transform:scaleX(0.8801);">Latest</div>
<div class="t" style="left:1004.97px;top:45.15px;font-size:13.20px;line-height:13.20px;color:#3fa86a;transform:scaleX(1.0800);-webkit-text-stroke:0;">113,012</div>
<div class="t" style="left:1005.06px;top:65.73px;font-size:8.20px;line-height:8.20px;color:#3ea868;font-weight:bold;-webkit-text-stroke:0;transform:scaleX(1.0000);-webkit-text-stroke:0;">113,012.4</div>
<div class="t" style="left:1005.06px;top:78.61px;font-size:8.20px;line-height:8.20px;color:#3ea868;font-weight:bold;-webkit-text-stroke:0;transform:scaleX(1.0000);-webkit-text-stroke:0;">113,012.4</div>
<div class="t" style="left:1005.06px;top:91.49px;font-size:8.20px;line-height:8.20px;color:#3ea868;font-weight:bold;-webkit-text-stroke:0;transform:scaleX(1.0000);-webkit-text-stroke:0;">113,012.4</div>
<div class="t" style="left:1005.06px;top:105.17px;font-size:8.20px;line-height:8.20px;color:#3ea868;font-weight:bold;-webkit-text-stroke:0;transform:scaleX(1.0000);-webkit-text-stroke:0;">113,012.4</div>
<div class="t" style="left:1005.06px;top:118.05px;font-size:8.20px;line-height:8.20px;color:#3ea868;font-weight:bold;-webkit-text-stroke:0;transform:scaleX(1.0000);-webkit-text-stroke:0;">113,012.4</div>
<div class="t" style="left:1005.06px;top:131.73px;font-size:8.20px;line-height:8.20px;color:#3ea868;font-weight:bold;-webkit-text-stroke:0;transform:scaleX(1.0000);-webkit-text-stroke:0;">113,012.4</div>
<div class="t" style="left:1005.06px;top:144.61px;font-size:8.20px;line-height:8.20px;color:#3ea868;font-weight:bold;-webkit-text-stroke:0;transform:scaleX(1.0000);-webkit-text-stroke:0;">113,012.4</div>
<div class="t" style="left:1005.06px;top:157.49px;font-size:8.20px;line-height:8.20px;color:#3ea868;font-weight:bold;-webkit-text-stroke:0;transform:scaleX(1.0000);-webkit-text-stroke:0;">113,012.4</div>
<div class="t" style="left:1005.06px;top:171.17px;font-size:8.20px;line-height:8.20px;color:#3ea868;font-weight:bold;-webkit-text-stroke:0;transform:scaleX(1.0000);-webkit-text-stroke:0;">113,012.4</div>
<div class="t" style="left:1005.06px;top:184.05px;font-size:8.20px;line-height:8.20px;color:#3ea868;font-weight:bold;-webkit-text-stroke:0;transform:scaleX(1.0000);-webkit-text-stroke:0;">113,012.4</div>
<div class="t" style="left:1005.06px;top:197.73px;font-size:8.20px;line-height:8.20px;color:#3ea868;font-weight:bold;-webkit-text-stroke:0;transform:scaleX(1.0000);-webkit-text-stroke:0;">113,012.4</div>
<div class="t" style="left:1005.06px;top:210.61px;font-size:8.20px;line-height:8.20px;color:#3ea868;font-weight:bold;-webkit-text-stroke:0;transform:scaleX(1.0000);-webkit-text-stroke:0;">113,012.4</div>
<div class="t" style="left:4.92px;top:450.08px;font-size:10.43px;line-height:10.43px;color:#a6a7b0;transform:scaleX(0.8975);">Hold Position</div>
<div class="t" style="left:72.85px;top:450.04px;font-size:10.43px;line-height:10.43px;color:#a6a7b0;transform:scaleX(0.8676);">Current Order</div>
<div class="t" style="left:140.43px;top:450.09px;font-size:10.43px;line-height:10.43px;color:#1d9a26;transform:scaleX(0.8930);">History Order</div>
<div class="t" style="left:8.42px;top:480.90px;font-size:9.86px;line-height:9.86px;color:#8d8e99;transform:scaleX(0.9347);">Contract</div>
<div class="t" style="left:68.84px;top:480.90px;font-size:9.86px;line-height:9.86px;color:#8d8e99;transform:scaleX(0.8943);">Leverage</div>
<div class="t" style="left:125.62px;top:480.90px;font-size:9.86px;line-height:9.86px;color:#8d8e99;transform:scaleX(0.9316);">Time</div>
<div class="t" style="left:224.63px;top:480.90px;font-size:9.86px;line-height:9.86px;color:#8d8e99;transform:scaleX(0.9316);">Transaction Type</div>
<div class="t" style="left:312.80px;top:480.90px;font-size:9.86px;line-height:9.86px;color:#8d8e99;transform:scaleX(0.9563);">Closed/Amount</div>
<div class="t" style="left:403.99px;top:480.93px;font-size:9.86px;line-height:9.86px;color:#8d8e99;transform:scaleX(0.9146);">Average Transaction Price/Order Price</div>
<div class="t" style="left:575.42px;top:480.88px;font-size:9.86px;line-height:9.86px;color:#8d8e99;transform:scaleX(0.9871);">Margin</div>
<div class="t" style="left:623.68px;top:480.88px;font-size:9.86px;line-height:9.86px;color:#8d8e99;transform:scaleX(0.8802);">Fee</div>
<div class="t" style="left:656.93px;top:480.90px;font-size:9.86px;line-height:9.86px;color:#8d8e99;transform:scaleX(0.9379);">Profit and Loss</div>
<div class="t" style="left:766.10px;top:480.88px;font-size:9.86px;line-height:9.86px;color:#8d8e99;transform:scaleX(0.9523);">Settlement profit and loss</div>
<div class="t" style="left:890.50px;top:480.90px;font-size:9.86px;line-height:9.86px;color:#8d8e99;transform:scaleX(0.9102);">Status</div>
<div class="t" style="left:943.52px;top:480.90px;font-size:9.86px;line-height:9.86px;color:#8d8e99;transform:scaleX(0.9648);">Operation</div>
<div class="t" style="left:9.00px;top:513.05px;font-size:9.71px;line-height:9.71px;color:#dcdce3;transform:scaleX(0.8460);">BTC/USDT</div>
<div class="t" style="left:68.45px;top:513.05px;font-size:9.71px;line-height:9.71px;color:#dcdce3;transform:scaleX(0.8694);">100X</div>
<div class="t" style="left:125.05px;top:513.05px;font-size:9.71px;line-height:9.71px;color:#dcdce3;transform:scaleX(0.9012);">08-19-2025 22:08:04</div>
<div class="t" style="left:224.76px;top:513.05px;font-size:9.71px;line-height:9.71px;color:#dcdce3;transform:scaleX(0.9275);">Sell close long</div>
<div class="t" style="left:312.89px;top:513.05px;font-size:9.71px;line-height:9.71px;color:#dcdce3;transform:scaleX(0.9159);">2500000/2500000</div>
<div class="t" style="left:403.29px;top:513.06px;font-size:9.71px;line-height:9.71px;color:#dcdce3;transform:scaleX(0.9515);">113012.4/--</div>
<div class="t" style="left:576.91px;top:513.05px;font-size:9.71px;line-height:9.71px;color:#dcdce3;transform:scaleX(0.9046);">25000</div>
<div class="t" style="left:623.95px;top:513.06px;font-size:9.71px;line-height:9.71px;color:#dcdce3;transform:scaleX(0.9108);">500</div>
<div class="t" style="left:657.59px;top:513.06px;font-size:9.71px;line-height:9.71px;color:#dcdce3;transform:scaleX(0.9101);">10293.29448 / 41.17%</div>
<div class="t" style="left:765.95px;top:513.05px;font-size:9.71px;line-height:9.71px;color:#dcdce3;transform:scaleX(0.9904);">--</div>
<div class="t" style="left:890.44px;top:513.06px;font-size:9.71px;line-height:9.71px;color:#dcdce3;transform:scaleX(0.9486);">Full deal</div>
<div class="t" style="left:8.99px;top:549.25px;font-size:9.42px;line-height:9.42px;color:#dcdce3;transform:scaleX(0.8704);">BTC/USDT</div>
<div class="t" style="left:68.44px;top:549.28px;font-size:9.42px;line-height:9.42px;color:#dcdce3;transform:scaleX(0.8953);">100X</div>
<div class="t" style="left:125.01px;top:549.26px;font-size:9.42px;line-height:9.42px;color:#dcdce3;transform:scaleX(0.9287);">08-19-2025 21:42:20</div>
<div class="t" style="left:224.62px;top:549.25px;font-size:9.42px;line-height:9.42px;color:#dcdce3;transform:scaleX(1.0053);">Buy/Long</div>
<div class="t" style="left:312.89px;top:549.26px;font-size:9.42px;line-height:9.42px;color:#dcdce3;transform:scaleX(0.9449);">2500000/2500000</div>
<div class="t" style="left:403.25px;top:549.25px;font-size:9.42px;line-height:9.42px;color:#dcdce3;transform:scaleX(0.9922);">112549/--</div>
<div class="t" style="left:576.90px;top:549.24px;font-size:9.42px;line-height:9.42px;color:#dcdce3;transform:scaleX(0.9371);">25000</div>
<div class="t" style="left:623.95px;top:549.25px;font-size:9.42px;line-height:9.42px;color:#dcdce3;transform:scaleX(0.9392);">500</div>
<div class="t" style="left:657.67px;top:549.25px;font-size:9.42px;line-height:9.42px;color:#dcdce3;transform:scaleX(0.9544);">-- / --</div>
<div class="t" style="left:765.93px;top:549.24px;font-size:9.42px;line-height:9.42px;color:#dcdce3;transform:scaleX(1.0222);">--</div>
<div class="t" style="left:890.44px;top:549.25px;font-size:9.42px;line-height:9.42px;color:#dcdce3;transform:scaleX(0.9778);">Full deal</div>
<div class="t" style="left:948.59px;top:515.97px;font-size:10.43px;line-height:10.43px;color:#ffffff;font-weight:bold;-webkit-text-stroke:0;transform:scaleX(0.8400);-webkit-text-stroke:0;">Details</div>
<div class="t" style="left:948.59px;top:552.95px;font-size:10.43px;line-height:10.43px;color:#ffffff;font-weight:bold;-webkit-text-stroke:0;transform:scaleX(0.8400);-webkit-text-stroke:0;">Details</div>
<div class="t" style="left:1008.89px;top:452.85px;font-size:9.86px;line-height:9.86px;color:#c6c7cf;transform:scaleX(0.8600);">Contract</div>
<div class="t" style="left:1009.59px;top:484.71px;font-size:9.86px;line-height:9.86px;color:#c6c7cf;transform:scaleX(0.8600);">Account</div>
<div class="t" style="left:1009.59px;top:517.37px;font-size:9.86px;line-height:9.86px;color:#c6c7cf;transform:scaleX(0.8600);">Available</div>
<div class="t" style="left:1009.75px;top:552.07px;font-size:9.86px;line-height:9.86px;color:#c6c7cf;transform:scaleX(0.8600);">position</div>
<div style="position:absolute;left:0.00px;top:28.50px;width:296.00px;height:7.30px;background:#0f101a;"></div>
<div style="position:absolute;left:290.00px;top:28.50px;width:734.00px;height:7.90px;background:#0f101a;"></div>
<div style="position:absolute;left:0.00px;top:358.00px;width:296.00px;height:80.00px;background:#0f101a;"></div>
<div style="position:absolute;left:996.00px;top:216.20px;width:28.00px;height:20.00px;background:#0f101a;"></div>
<div style="position:absolute;left:627.9px;top:464.6px;width:124.6px;height:62.4px;border:1.8px solid #e2572a;"></div>
</body></html>
